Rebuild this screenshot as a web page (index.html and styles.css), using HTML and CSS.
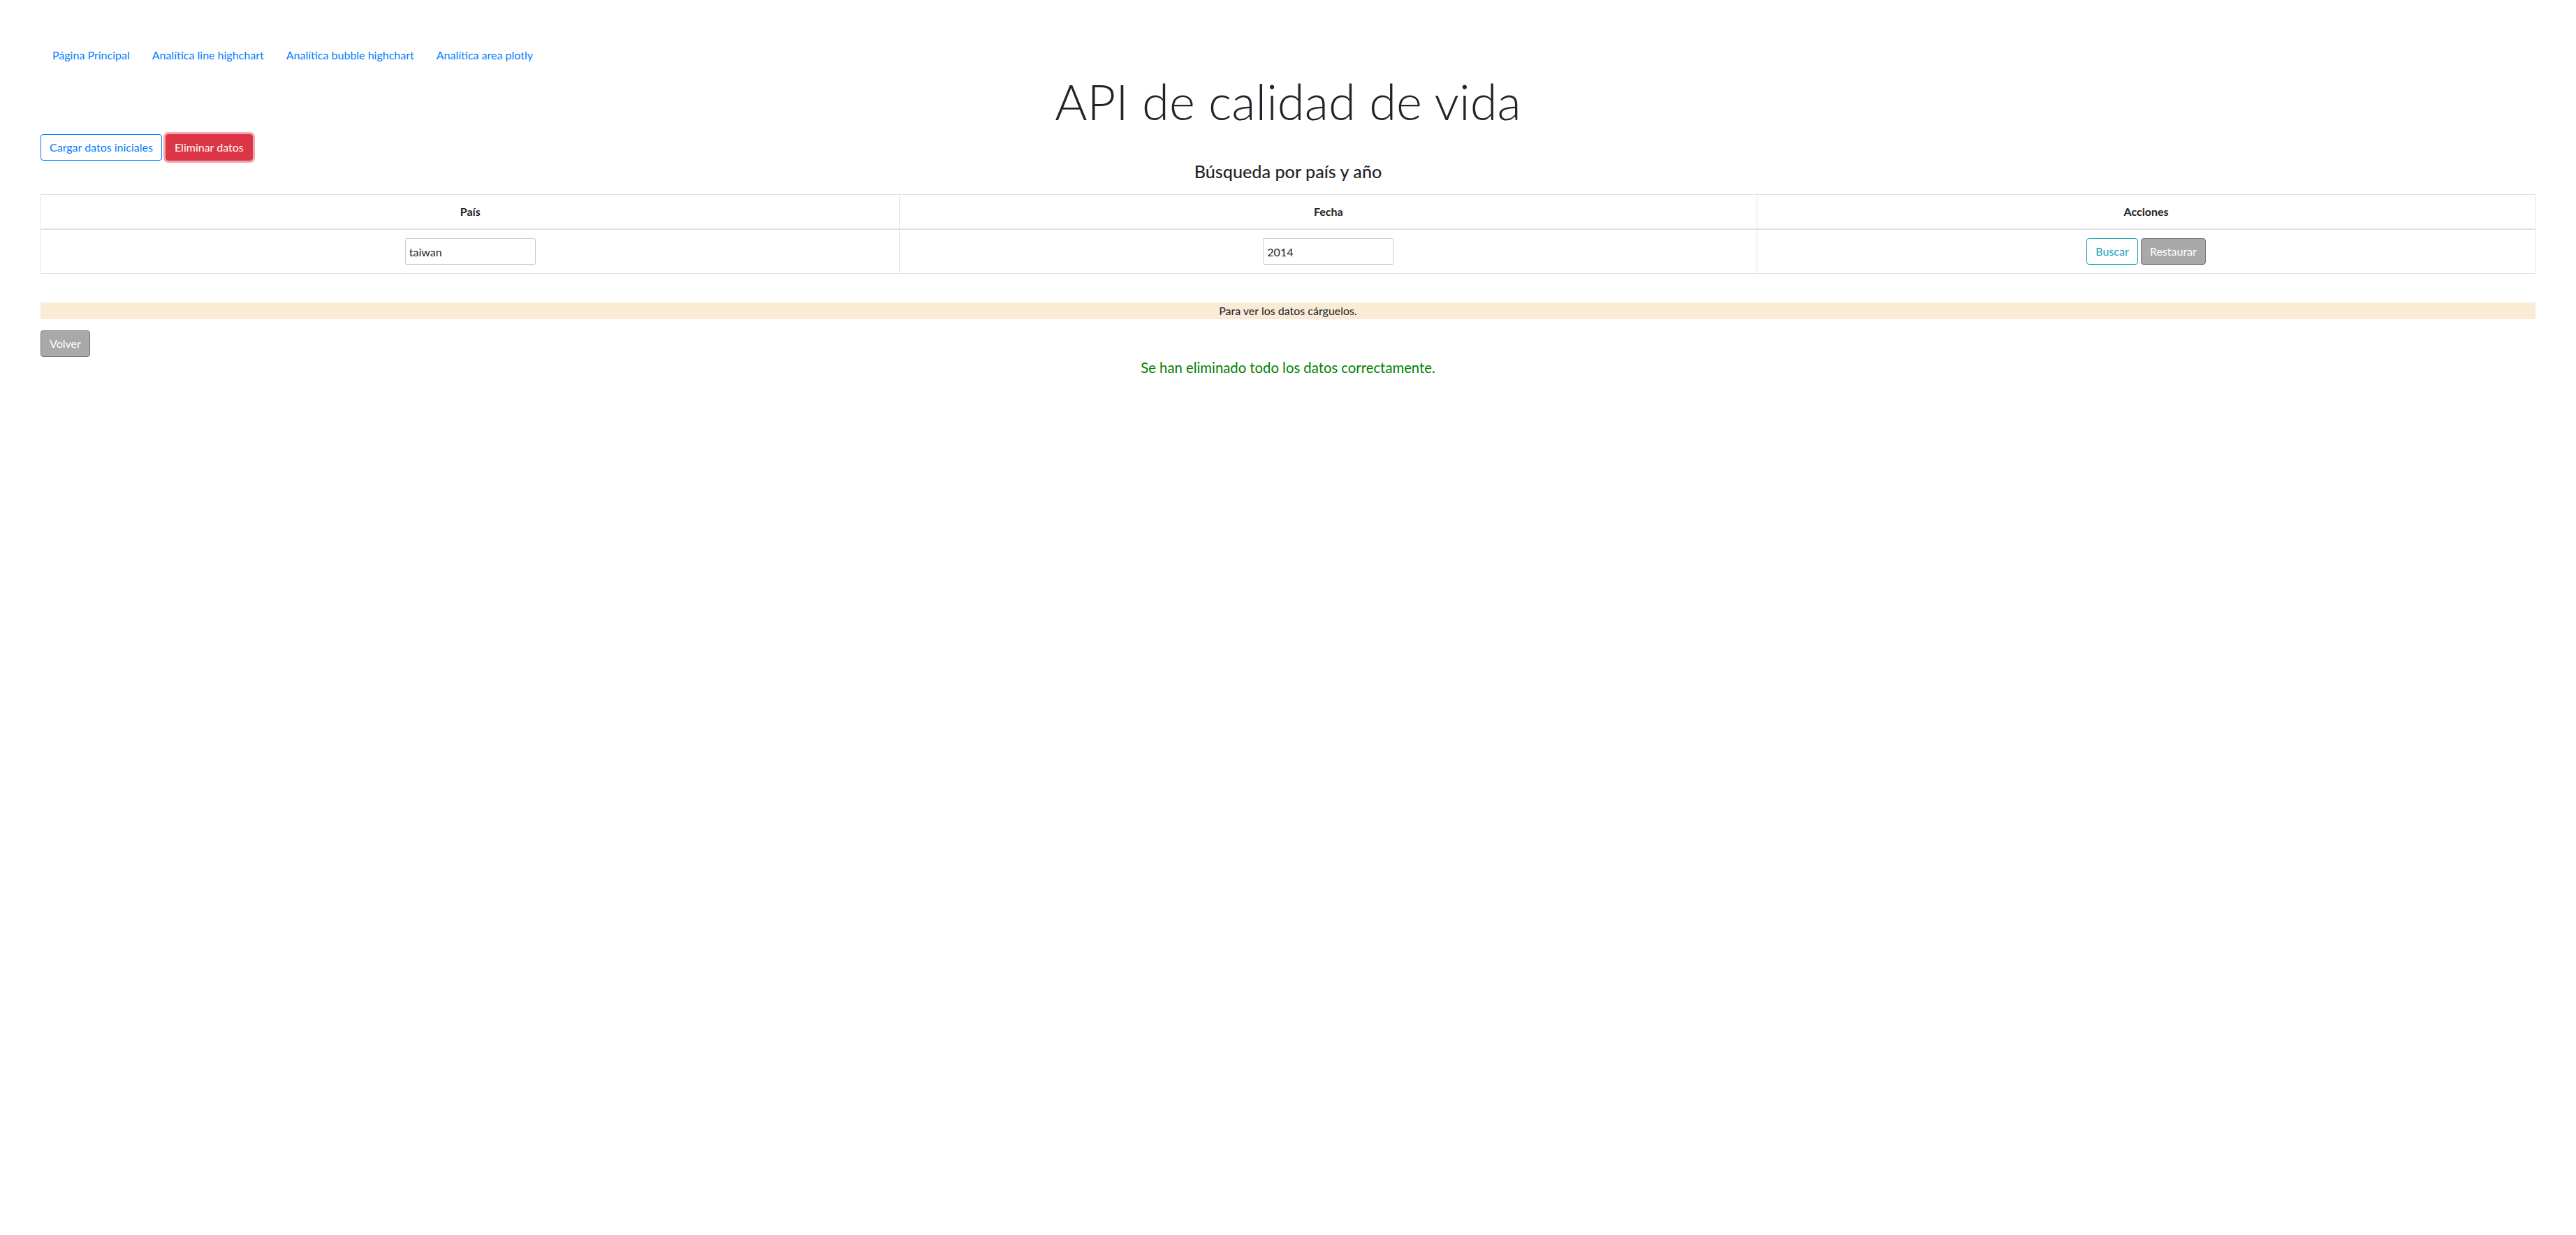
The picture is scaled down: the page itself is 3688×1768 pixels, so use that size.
FILE: index.html
```html
<!DOCTYPE html>
<html lang="es">
<head>
<meta charset="utf-8">
<title>API de calidad de vida</title>
<link rel="stylesheet" href="styles.css">
</head>
<body>
<div class="page">
  <nav class="nav">
    <a class="nav-link" href="#">Página Principal</a>
    <a class="nav-link" href="#">Analítica line highchart</a>
    <a class="nav-link" href="#">Analítica bubble highchart</a>
    <a class="nav-link" href="#">Analítica area plotly</a>
  </nav>
  <h1 class="title">API de calidad de vida</h1>
  <div class="btn-row">
    <button class="btn btn-outline-primary">Cargar datos iniciales</button>
    <button class="btn btn-danger btn-focus">Eliminar datos</button>
  </div>
  <h4 class="subtitle">Búsqueda por país y año</h4>
  <table class="table">
    <colgroup>
      <col class="col-pais">
      <col class="col-fecha">
      <col class="col-acc">
    </colgroup>
    <thead>
      <tr>
        <th>País</th>
        <th>Fecha</th>
        <th>Acciones</th>
      </tr>
    </thead>
    <tbody>
      <tr>
        <td><input class="field" type="text" value="taiwan"></td>
        <td><input class="field" type="text" value="2014"></td>
        <td class="actions">
          <button class="btn btn-outline-info">Buscar</button>
          <button class="btn btn-gray">Restaurar</button>
        </td>
      </tr>
    </tbody>
  </table>
  <div class="notice">Para ver los datos cárguelos.</div>
  <div class="back-row">
    <button class="btn btn-gray">Volver</button>
  </div>
  <p class="success">Se han eliminado todo los datos correctamente.</p>
</div>
</body>
</html>
```
FILE: styles.css
```css
html, body {
  margin: 0;
  padding: 0;
  background: #ffffff;
}
body {
  font-family: "Lato", "Open Sans", "Noto Sans", sans-serif;
  font-size: 16px;
  line-height: 1.5;
  color: #212529;
}
.page {
  padding: 0 58px;
}
.nav {
  display: flex;
  margin-top: 59px;
  margin-left: 1px;
}
.nav-link {
  display: block;
  padding: 8px 16px;
  line-height: 24px;
  color: #007bff;
  text-decoration: none;
}
.title {
  margin: 3px 0 4px;
  font-size: 70.7px;
  font-weight: 300;
  line-height: 86px;
  text-align: center;
  color: #212529;
}
.btn-row {
  display: flex;
  gap: 4px;
}
.btn {
  display: inline-block;
  box-sizing: border-box;
  height: 38px;
  padding: 0 12px;
  font-family: inherit;
  font-size: 16px;
  line-height: 36px;
  border: 1px solid transparent;
  border-radius: 4px;
  background: #ffffff;
  cursor: pointer;
}
.btn-outline-primary {
  color: #007bff;
  border-color: #007bff;
}
.btn-danger {
  color: #ffffff;
  background: #dc3545;
  border-color: #dc3545;
}
.btn-focus {
  box-shadow: 0 0 0 3px rgba(225, 83, 97, 0.5);
  margin-left: 1px;
}
.btn-outline-info {
  color: #17a2b8;
  border-color: #17a2b8;
}
.btn-gray {
  color: #ffffff;
  background: #a9a9a9;
  border-color: #6c757d;
}
.subtitle {
  margin: 1px 0 18px;
  font-size: 25.2px;
  font-weight: 500;
  line-height: 29px;
  text-align: center;
}
.table {
  width: 100%;
  table-layout: fixed;
  border-collapse: collapse;
  margin: 0;
}
.col-pais { width: 34.43%; }
.col-fecha { width: 34.38%; }
.col-acc { width: 31.19%; }
.table th,
.table td {
  border: 1px solid #dee2e6;
  padding: 12px;
  text-align: center;
  vertical-align: top;
}
.table th {
  font-weight: 700;
  border-bottom-width: 2px;
  line-height: 24px;
}
.table td {
  line-height: 38px;
}
.field {
  box-sizing: border-box;
  width: 187px;
  height: 38px;
  padding: 0 5px;
  border: 1px solid #cccccc;
  border-radius: 2px;
  font-family: inherit;
  font-size: 16px;
  color: #212529;
  vertical-align: top;
}
.actions .btn {
  vertical-align: top;
}
.notice {
  margin-top: 41px;
  background: #faebd7;
  line-height: 24px;
  text-align: center;
}
.back-row {
  margin-top: 16px;
  display: flex;
}
.success {
  margin: 0;
  font-size: 20.3px;
  line-height: 30px;
  color: #008000;
  text-align: center;
}
```
